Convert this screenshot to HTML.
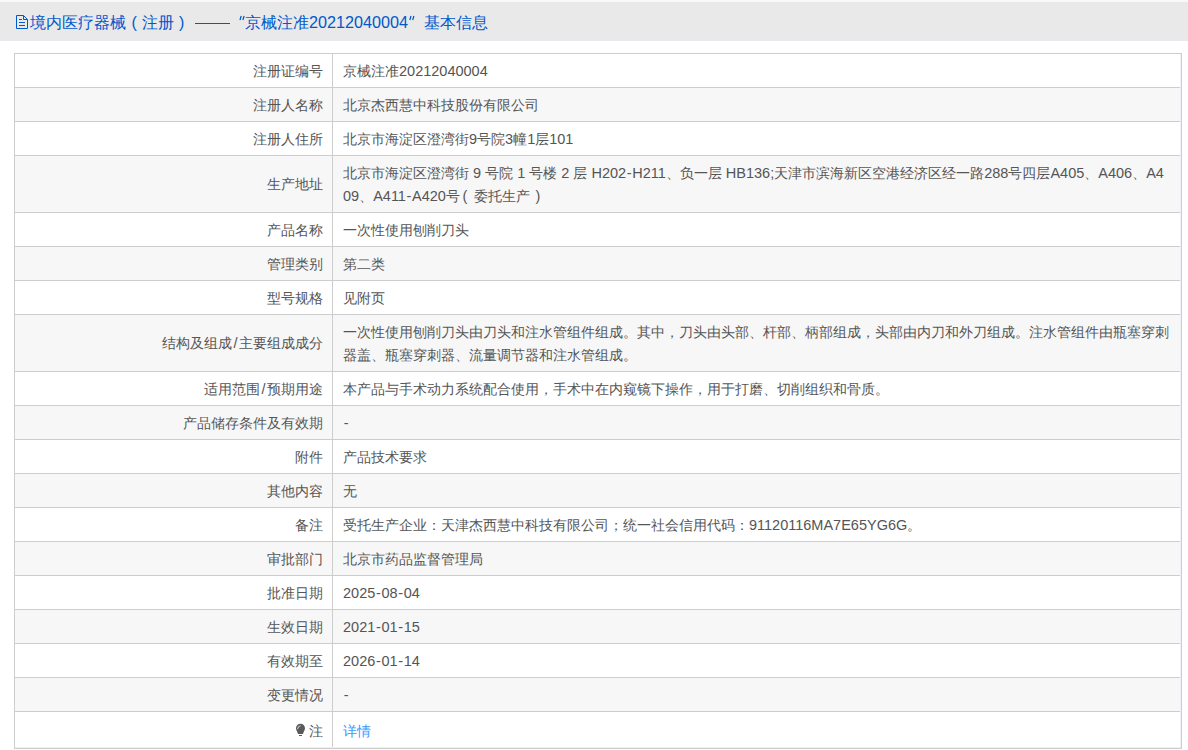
<!DOCTYPE html><html><head><meta charset="utf-8"><style>
*{margin:0;padding:0;box-sizing:border-box}
html,body{width:1188px;height:750px;overflow:hidden;background:#fff}
body{font-family:"Liberation Sans",sans-serif;font-size:14px;color:#555;position:relative}
.topstrip{position:absolute;left:0;top:0;width:1188px;height:2px;background:#f8f8f8}
.bar{position:absolute;left:0;top:2px;width:1188px;height:39px;background:#e9e9e9;border-bottom:1px solid #e7e9ef}
.t{position:absolute;top:11px;font-size:16px;line-height:23px;color:#0058cc;white-space:nowrap}
.td{font-size:16.2px}
.dash{position:absolute;left:195px;top:23px;width:35px;height:1px;background:#0058cc}
.doc{position:absolute;left:0;top:0;width:40px;height:40px}
.row{position:absolute;left:14px;width:1168px;border-top:1px solid #cdcdcd}
.row.g{background:#f7f7f7}
.lab{position:absolute;left:1px;width:308px;text-align:right;white-space:nowrap;line-height:23px}
.val{position:absolute;left:329px;white-space:nowrap;line-height:23px}
.vl{position:absolute;left:332px;top:53px;width:1px;height:694px;background:#cdcdcd}
.tb{position:absolute;left:14px;top:53px;width:1168px;height:696px;border:1px solid #cdcdcd}
.pl{display:inline-block;width:14px;padding-left:2.5px}
.pr{display:inline-block;width:14px;padding-left:5.5px}
.sl{display:inline-block;width:7px;text-align:center;font-size:14.5px}
.l{font-size:14.5px;line-height:1}
.h{margin:0 0.65px 0 0.65px}
.link{color:#3399ff}
.bulb{position:absolute;left:290px;top:718px;width:20px;height:22px}
</style></head><body>
<div class="topstrip"></div><div class="bar"></div>
<svg class="doc" viewBox="0 0 40 40"><path d="M16.5 15.5 H23.5 L27.5 19.5 V28.5 H16.5 Z M23.5 15.5 V19.5 H27.5 M19 19.5 H22 M19 22.5 H25 M19 25.5 H25" fill="none" stroke="#0058cc" stroke-width="1"/></svg>
<div class="t " style="left:30px">境内医疗器械</div>
<div class="t " style="left:131.5px">(</div>
<div class="t " style="left:141.5px">注册</div>
<div class="t " style="left:179px">)</div>
<div class="t " style="left:245px">京械注准</div>
<div class="t td" style="left:309px">20212040004</div>
<div class="t " style="left:424px">基本信息</div>
<div class="dash"></div>
<svg style="position:absolute;left:0;top:0" width="440" height="40" viewBox="0 0 440 40"><path d="M241.2 16 L240 20 M244.1 16 L242.9 20 M411 16 L409.8 20 M413.9 16 L412.7 20" stroke="#0058cc" stroke-width="1.25" stroke-linecap="butt" fill="none"/></svg>
<div class="row" style="top:53px;height:34px"><div class="lab" style="top:6px">注册证编号</div><div class="val" style="top:6px">京械注准<span class=l>20212040004</span></div></div>
<div class="row g" style="top:87px;height:34px"><div class="lab" style="top:6px">注册人名称</div><div class="val" style="top:6px">北京杰西慧中科技股份有限公司</div></div>
<div class="row" style="top:121px;height:34px"><div class="lab" style="top:6px">注册人住所</div><div class="val" style="top:6px">北京市海淀区澄湾街<span class=l>9</span>号院<span class=l>3</span>幢<span class=l>1</span>层<span class=l>101</span></div></div>
<div class="row g" style="top:155px;height:57px"><div class="lab" style="top:17px">生产地址</div><div class="val" style="top:6px">北京市海淀区澄湾街<span class=l> 9 </span>号院<span class=l> 1 </span>号楼<span class=l> 2 </span>层<span class=l> H202<span class=h>-</span>H211</span>、负一层<span class=l> HB136;</span>天津市滨海新区空港经济区经一路<span class=l>288</span>号四层<span class=l>A405</span>、<span class=l>A406</span>、<span class=l>A4</span><br><span class=l>09</span>、<span class=l>A411<span class=h>-</span>A420</span>号<span class=pl><span class=l>(</span></span>委托生产<span class=pr><span class=l>)</span></span></div></div>
<div class="row" style="top:212px;height:34px"><div class="lab" style="top:6px">产品名称</div><div class="val" style="top:6px">一次性使用刨削刀头</div></div>
<div class="row g" style="top:246px;height:34px"><div class="lab" style="top:6px">管理类别</div><div class="val" style="top:6px">第二类</div></div>
<div class="row" style="top:280px;height:34px"><div class="lab" style="top:6px">型号规格</div><div class="val" style="top:6px">见附页</div></div>
<div class="row g" style="top:314px;height:57px"><div class="lab" style="top:17px">结构及组成<span class=sl>/</span>主要组成成分</div><div class="val" style="top:6px">一次性使用刨削刀头由刀头和注水管组件组成。其中，刀头由头部、杆部、柄部组成，头部由内刀和外刀组成。注水管组件由瓶塞穿刺<br>器盖、瓶塞穿刺器、流量调节器和注水管组成。</div></div>
<div class="row" style="top:371px;height:34px"><div class="lab" style="top:6px">适用范围<span class=sl>/</span>预期用途</div><div class="val" style="top:6px">本产品与手术动力系统配合使用，手术中在内窥镜下操作，用于打磨、切削组织和骨质。</div></div>
<div class="row g" style="top:405px;height:34px"><div class="lab" style="top:6px">产品储存条件及有效期</div><div class="val" style="top:6px"><span class=l><span class=h>-</span></span></div></div>
<div class="row" style="top:439px;height:34px"><div class="lab" style="top:6px">附件</div><div class="val" style="top:6px">产品技术要求</div></div>
<div class="row g" style="top:473px;height:34px"><div class="lab" style="top:6px">其他内容</div><div class="val" style="top:6px">无</div></div>
<div class="row" style="top:507px;height:34px"><div class="lab" style="top:6px">备注</div><div class="val" style="top:6px">受托生产企业：天津杰西慧中科技有限公司；统一社会信用代码：<span class=l>91120116MA7E65YG6G</span>。</div></div>
<div class="row g" style="top:541px;height:34px"><div class="lab" style="top:6px">审批部门</div><div class="val" style="top:6px">北京市药品监督管理局</div></div>
<div class="row" style="top:575px;height:34px"><div class="lab" style="top:6px">批准日期</div><div class="val" style="top:6px"><span class=l>2025<span class=h>-</span>08<span class=h>-</span>04</span></div></div>
<div class="row g" style="top:609px;height:34px"><div class="lab" style="top:6px">生效日期</div><div class="val" style="top:6px"><span class=l>2021<span class=h>-</span>01<span class=h>-</span>15</span></div></div>
<div class="row" style="top:643px;height:34px"><div class="lab" style="top:6px">有效期至</div><div class="val" style="top:6px"><span class=l>2026<span class=h>-</span>01<span class=h>-</span>14</span></div></div>
<div class="row g" style="top:677px;height:34px"><div class="lab" style="top:6px">变更情况</div><div class="val" style="top:6px"><span class=l><span class=h>-</span></span></div></div>
<div class="row" style="top:711px;height:37px"><div class="lab" style="top:8px">注</div><div class="val" style="top:8px"><span class=link>详情</span></div></div>
<div class="tb"></div><div class="vl"></div><div style="position:absolute;left:15px;top:747px;width:1166px;height:1px;background:#eef0f7"></div><div style="position:absolute;left:1180px;top:54px;width:1px;height:693px;background:#f1f2f8"></div>
<svg class="bulb" viewBox="290 718 20 22"><path d="M296 728.2 A4.5 4.5 0 1 1 305 728.2 C305 730.5 303.4 731.6 303 734 H298 C297.6 731.6 296 730.5 296 728.2 Z" fill="#5a5a5a"/><rect x="299" y="735" width="3" height="1" fill="#5a5a5a"/><path d="M297.6 729.2 Q297.6 726.2 300.6 725.7" fill="none" stroke="#fff" stroke-width="0.9" opacity="0.85"/></svg>
</body></html>
